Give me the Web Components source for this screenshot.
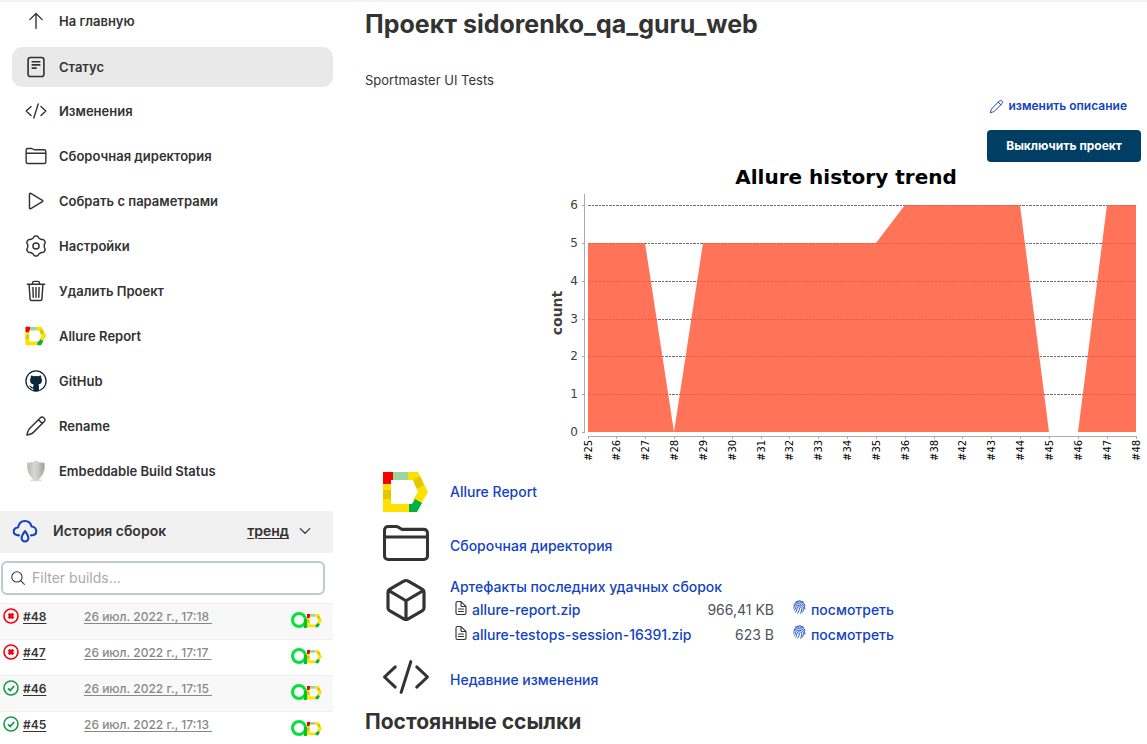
<!DOCTYPE html>
<html lang="ru">
<head>
<meta charset="utf-8">
<title>sidorenko_qa_guru_web</title>
<style>
html { scrollbar-width: none; }
body { margin: 0; font: 14px/20px Inter, "Noto Sans", sans-serif; color: #333; background: #fff; --link: #1343c0; }
</style>
</head>
<body>
<project-page></project-page>
<script>
const stroke = (body, w = 32, box = '0 0 512 512') => `<svg viewBox="${box}" fill="none" stroke="currentColor" stroke-width="${w}" stroke-linecap="round" stroke-linejoin="round">${body}</svg>`;
const WIDE = '-12 -12 536 536';
const gearPath = () => {
  const pts = [];
  for (let i = 0; i < 90; i++) {
    const t = i * Math.PI / 45, r = 212 + 22 * Math.tanh(1.6 * Math.cos(6 * t));
    pts.push(`${Math.round(256 + r * Math.sin(t))} ${Math.round(256 - r * Math.cos(t))}`);
  }
  return `M${pts.join('L')}Z`;
};
const DOC = '<path d="M416 221V416a48 48 0 0 1-48 48H144a48 48 0 0 1-48-48V96a48 48 0 0 1 48-48h99a32 32 0 0 1 22 9L407 199a32 32 0 0 1 9 22ZM256 56V176a32 32 0 0 0 32 32H408M176 288H336M176 368H336"/>';
const PEN = '<path d="M358 62a52 52 0 0 1 76 0l14 14a52 52 0 0 1 0 76L196 404Q166 434 116 448L44 468 64 396Q78 346 108 316ZM312 108L404 200"/>';
const ALLURE = '<path fill="#ffe000" d="M0 12H8V32H26V40H0ZM25 0H35L45 20 38 32 30 28 35 20 30 8H25Z"/><path fill="#f60000" d="M0 0H10V8H8V12H0Z"/><path fill="#9ad4a0" d="M10 0H25V8H10Z"/><path fill="#e2c800" d="M0 18H8V27H0ZM30 8L37 4 41 13 34 17Z"/><path fill="#00b140" d="M26 32H29L32 27 39 31 34 40H26Z"/>';
const ICONS = {
  up: stroke('<path d="M112 224L256 80 400 224M256 90V428"/>'),
  status: stroke('<rect x="72" y="36" width="368" height="440" rx="54"/><path d="M168 134H344M168 208H344M168 282H260"/>', 38),
  code: stroke('<path d="M136 368L16 256 136 144M376 368L496 256 376 144M310 84L202 428"/>', 34, WIDE),
  folder: stroke('<path d="M456 440H56a40 40 0 0 1-40-40V112A40 40 0 0 1 56 72h92a40 40 0 0 1 22 7l28 18A40 40 0 0 0 220 104H456a40 40 0 0 1 40 40V400A40 40 0 0 1 456 440ZM16 188H496"/>', 34, WIDE),
  play: stroke('<path d="M104 96V416c0 17 17 28 31 20l270-163c12-7 12-27 0-34L135 76C121 68 104 79 104 96Z"/>', 34),
  gear: stroke(`<circle cx="256" cy="256" r="72"/><path d="${gearPath()}"/>`, 34),
  trash: stroke('<path d="M96 112L118 440c1 18 14 36 34 36H360c20 0 33-18 34-36L416 112M56 100H456M176 100V68a36 36 0 0 1 36-36h88a36 36 0 0 1 36 36v32M256 176V400M184 176L192 400M328 176L320 400"/>', 34),
  pen: stroke(PEN, 34),
  allure: `<svg viewBox="-1 -4 48 48">${ALLURE}</svg>`,
  github: '<svg viewBox="0 0 24 24" fill="#0b2539"><circle cx="12" cy="12" r="11" fill="#fff" stroke="#0b2539" stroke-width="1.4"/><path d="M6.6 5.900Q8 6 9.600 6.900Q12 6.400 14.400 6.900Q16 6 17.400 5.900Q17.900 7 17.600 8.400Q18.600 9.600 18.500 11.200Q18.400 15.200 14.600 15.800Q15.200 16.600 15.200 17.800V22.600Q12 23.600 9 22.600V20.200Q6.600 20.500 5.800 18.800Q5.300 17.600 4.500 17.200Q5.600 16.600 6.600 17.800Q7.600 19.200 9 18.600Q8.900 16.400 9.500 15.800Q5.600 15.200 5.500 11.200Q5.400 9.600 6.400 8.400Q6.100 7 6.600 5.900Z"/></svg>',
  shield: '<svg viewBox="0 0 24 24"><defs><linearGradient id="s"><stop offset="0" stop-color="#b5b7b1"/><stop offset=".45" stop-color="#dcddd9"/><stop offset="1" stop-color="#9a9d96"/></linearGradient></defs><ellipse cx="12" cy="22" rx="7" ry="1.2" fill="#ddd"/><path fill="url(#s)" stroke="#c9cac6" stroke-width=".8" d="M12 1Q16 3.600 21.500 3.200Q22 10 19.500 15Q17 20 12 22.500Q7 20 4.500 15Q2 10 2.500 3.200Q8 3.600 12 1Z"/><path d="M12 4V19" stroke="#aeb0aa" stroke-width=".8" stroke-dasharray="1 1"/></svg>',
  cloud: stroke('<path d="M138 342C80 340 34 310 34 266C34 220 74 192 118 188C134 112 186 58 252 58C318 58 370 104 386 168C440 172 478 212 478 260C478 308 440 342 374 342M256 256C232 294 188 348 188 396A68 66 0 0 0 324 396C324 348 280 294 256 256Z"/>', 40),
  chevron: stroke('<path d="M84 170L256 342 428 170"/>', 48),
  search: stroke('<circle cx="221" cy="221" r="165"/><path d="M342 342L460 460"/>', 34),
  failed: '<svg viewBox="0 0 16 16" fill="none" stroke="#f0000f"><circle cx="8" cy="8" r="7" stroke-width="1.600"/><path d="M5.700 5.700L10.300 10.300M10.300 5.700L5.700 10.300" stroke-width="2.800"/></svg>',
  passed: '<svg viewBox="0 0 16 16" fill="none" stroke="#169c46"><circle cx="8" cy="8" r="7" stroke-width="1.600"/><path d="M5 8.300L7.200 10.400 11.200 6" stroke-width="1.800"/></svg>',
  cube: stroke('<path d="M448 341V171A32 32 0 0 0 432 143L280 55a48 48 0 0 0-48 0L80 143A32 32 0 0 0 64 171V341A32 32 0 0 0 80 369l152 88a48 48 0 0 0 48 0l152-88A32 32 0 0 0 448 341ZM69 154L256 264 443 154M256 464V264"/>', 34),
  doc: stroke(DOC, 36, '32 24 448 464'),
  print: stroke('<path d="M120 84Q256 -10 392 84M72 200Q92 84 256 84Q420 84 440 200M60 300Q60 140 256 140Q452 140 440 330M90 370Q120 330 116 280Q120 196 256 196Q400 196 390 310Q388 380 360 430M130 430Q176 360 172 290Q176 248 256 248Q340 248 334 310Q330 400 296 470M196 464Q256 370 256 300"/>', 30)
};
class BaseElement extends HTMLElement {
  render(css, html) {
    this.attachShadow({ mode: 'open' }).innerHTML = `<style>*{box-sizing:border-box}${css}</style>${html}`;
  }
}
customElements.define('app-icon', class extends BaseElement {
  connectedCallback() {
    this.render(':host{display:block;flex:none;width:24px;height:24px}svg{display:block;width:100%;height:100%;overflow:visible}', ICONS[this.getAttribute('name')]);
  }
});
customElements.define('nav-item', class extends BaseElement {
  connectedCallback() {
    this.render(`:host{display:block}
      a{display:flex;align-items:center;gap:12px;height:40px;padding:0 13px 2px;border-radius:10px;color:inherit;text-decoration:none;font-size:13px;font-weight:600}
      :host([active]) a{padding-bottom:0;background:#e9e9e9}
      app-icon{width:22px;height:22px}`,
      `<a href="#"><app-icon name="${this.getAttribute('icon')}"></app-icon><span><slot></slot></span></a>`);
  }
});
customElements.define('build-row', class extends BaseElement {
  connectedCallback() {
    this.render(`:host{display:flex;align-items:flex-start;height:36px;padding:4px 11px 0 3px;border-top:1px solid #efefef;font-size:12px;line-height:18px}
      :host(:nth-child(odd)){background:#f8f8f8}
      app-icon{width:16px;height:16px}
      a{color:inherit;text-underline-offset:2px}
      .n{width:61px;margin-left:4px;font-weight:600}
      .d{color:#888;white-space:pre;flex:1;font-weight:500}
      .b{display:flex;margin-top:3px}
      .b svg{display:block;width:32px;height:18px}`,
      `<app-icon name="${this.getAttribute('state')}"></app-icon>
       <a class="n" href="#"><slot></slot></a>
       <span class="d"><a href="#">${this.getAttribute('date')}&nbsp;</a></span>
       <a class="b" href="#" aria-label="Allure"><svg viewBox="0 0 32 18"><circle cx="9" cy="9" r="6.500" fill="none" stroke="#05e03c" stroke-width="3"/><path d="M15.500 8V17" stroke="#00c234" stroke-width="3"/><g transform="translate(17 3) scale(.33)">${ALLURE}</g></svg></a>`);
  }
});
customElements.define('build-history', class extends BaseElement {
  connectedCallback() {
    this.render(`:host{display:block}
      header{display:flex;align-items:center;height:42px;padding:0 21px 2px 12px;background:#f1f1f1;font-weight:600}
      header app-icon{width:26px;height:26px;color:#1343c0}
      h2{flex:1;margin:0 0 0 15px;font-size:14px;font-weight:600}
      a{color:inherit;text-underline-offset:2px}
      header .c{width:14px;height:14px;margin-left:9px;color:#333}
      label{display:flex;align-items:center;gap:6px;height:34px;margin:8px 8px 8px 1px;padding:0 7px;border:2px solid #bdcad2;border-radius:6px}
      label app-icon{width:16px;height:16px}
      input{flex:1;min-width:0;border:0;padding:0;outline:0;background:none;font:inherit;color:inherit}
      input::placeholder{color:#aaa;opacity:1}`,
      `<header><app-icon name="cloud"></app-icon><h2>История сборок</h2><a href="#">тренд</a><app-icon class="c" name="chevron"></app-icon></header>
       <label><app-icon name="search"></app-icon><input type="text" placeholder="Filter builds..." aria-label="Filter builds"></label>
       <div>
       <build-row state="failed" date="26 июл. 2022 г., 17:18">#48</build-row>
       <build-row state="failed" date="26 июл. 2022 г., 17:17">#47</build-row>
       <build-row state="passed" date="26 июл. 2022 г., 17:15">#46</build-row>
       <build-row state="passed" date="26 июл. 2022 г., 17:13">#45</build-row>
       </div>`);
  }
});
customElements.define('side-panel', class extends BaseElement {
  connectedCallback() {
    this.render(':host{display:block}nav{display:grid;gap:5px;padding-left:12px;margin-bottom:19px}',
      `<nav>
        <nav-item icon="up">На главную</nav-item>
        <nav-item icon="status" active>Статус</nav-item>
        <nav-item icon="code">Изменения</nav-item>
        <nav-item icon="folder">Сборочная директория</nav-item>
        <nav-item icon="play">Собрать с параметрами</nav-item>
        <nav-item icon="gear">Настройки</nav-item>
        <nav-item icon="trash">Удалить Проект</nav-item>
        <nav-item icon="allure">Allure Report</nav-item>
        <nav-item icon="github">GitHub</nav-item>
        <nav-item icon="pen">Rename</nav-item>
        <nav-item icon="shield">Embeddable Build Status</nav-item>
      </nav><build-history></build-history>`);
  }
});
customElements.define('trend-chart', class extends BaseElement {
  connectedCallback() {
    const builds = [25,26,27,28,29,30,31,32,33,34,35,36,38,42,43,44,45,46,47,48];
    const counts = [5,5,5,0,5,5,5,5,5,5,5,6,6,6,6,6,0,0,6,6];
    const x = i => Math.floor(47 + i * 548 / 19), y = v => Math.round(269 - v * 227 / 6);
    let grid = '', ticks = '', labels = '';
    for (let v = 0; v <= 6; v++) {
      if (v) grid += `<path d="M47 ${y(v)}.500H595" stroke="#707070" stroke-dasharray="3 1 2 1"/>`;
      ticks += `<path d="M41 ${y(v)}.500h3" stroke="#aaa"/>`;
      labels += `<text x="37" y="${y(v) + 4}" text-anchor="end" font-size="12" fill="#404040">${v}</text>`;
    }
    builds.forEach((b, i) => {
      ticks += `<path d="M${x(i)}.500 273v3" stroke="#aaa"/>`;
      labels += `<text transform="translate(${x(i) + 4} 298) rotate(-90)" font-size="10" fill="#000">#${b}</text>`;
    });
    this.render(':host{display:block;width:600px;max-width:100%}svg{display:block;width:100%;font-family:"DejaVu Sans",sans-serif}',
      `<svg viewBox="0 0 600 300" role="img" aria-label="Allure history trend">
        ${grid}
        <path fill="#ff5a3c" fill-opacity=".85" d="M47 269${counts.map((c, i) => `L${x(i)} ${y(c)}`).join('')}V269Z"/>
        <path d="M43.500 31V269M47 273.500H595" stroke="#aaa"/>${ticks}${labels}
        <text x="305" y="21" text-anchor="middle" font-size="20" font-weight="700" fill="#000">Allure history trend</text>
        <text transform="translate(21 150) rotate(-90)" text-anchor="middle" font-size="14" font-weight="700" fill="#404040">count</text>
      </svg>`);
  }
});
customElements.define('summary-row', class extends BaseElement {
  connectedCallback() {
    this.render(`:host{display:grid;grid-template-columns:48px 1fr;column-gap:20px;min-height:54px}
      app-icon{width:48px;height:48px}
      app-icon[name=allure]{align-self:center}
      .c{align-self:center}
      :host([top]){padding:3px 0 5px}
      :host([top]) .c{align-self:start}
      ::slotted(a){color:var(--link);text-decoration:none;font-weight:500}`,
      `<app-icon name="${this.getAttribute('icon')}"></app-icon><div class="c"><slot></slot></div>`);
  }
});
customElements.define('artifact-list', class extends BaseElement {
  connectedCallback() {
    const files = [['allure-report.zip', '966,41 KB'], ['allure-testops-session-16391.zip', '623 B']];
    this.render(`:host{display:block}
      .t{display:block;line-height:22px}
      a{color:var(--link);text-decoration:none;font-weight:500}
      table{border-collapse:collapse}
      td{height:25px;padding:0 0 2px;white-space:nowrap}
      .f{display:flex;gap:4px;padding-left:4px;align-items:center}
      .f app-icon{width:14px;height:16px;margin-bottom:3px}
      .s{padding-left:16px;text-align:right;color:#4d545d}
      .p{padding-left:18px}
      .p a{display:flex;align-items:center;gap:4px}
      .p app-icon{width:15px;height:16px;margin-bottom:5px}`,
      `<a class="t" href="#">Артефакты последних удачных сборок</a>
       <table>${files.map(f => `<tr><td><div class="f"><app-icon name="doc"></app-icon><a href="#">${f[0]}</a></div></td><td class="s">${f[1]}</td><td class="p"><a href="#"><app-icon name="print"></app-icon>посмотреть</a></td></tr>`).join('')}</table>`);
  }
});
customElements.define('project-main', class extends BaseElement {
  connectedCallback() {
    this.render(`:host{display:block;min-width:0;padding:6px 6px 0 32px}
      h1{margin:0;font-size:25px;line-height:32px;font-weight:700}
      h2{margin:0;font-size:21px;line-height:30px;font-weight:700}
      p{margin:30px 0 0;font-size:13px;line-height:20px}
      .a{display:flex;flex-direction:column;align-items:flex-end}
      .e{display:flex;align-items:center;gap:4px;margin:6px 14px 14px 0;color:var(--link);font-size:12px;font-weight:600;text-decoration:none}
      .e app-icon{width:15px;height:15px}
      button{height:32px;padding:0 19px;border:0;border-radius:4px;background:#003e64;color:#fff;font:700 12px/20px Inter,"Noto Sans",sans-serif}
      trend-chart{margin:1px 0 2px}
      .l{padding-left:17px}`,
      `<h1>Проект sidorenko_qa_guru_web</h1><p>Sportmaster UI Tests</p>
       <div class="a"><a class="e" href="#"><app-icon name="pen"></app-icon>изменить описание</a>
       <button type="button">Выключить проект</button><trend-chart></trend-chart></div>
       <div class="l">
       <summary-row icon="allure"><a href="#">Allure Report</a></summary-row>
       <summary-row icon="folder"><a href="#">Сборочная директория</a></summary-row>
       <summary-row icon="cube" top><artifact-list></artifact-list></summary-row>
       <summary-row icon="code"><a href="#">Недавние изменения</a></summary-row>
       </div><h2>Постоянные ссылки</h2>`);
  }
});
customElements.define('project-page', class extends BaseElement {
  connectedCallback() {
    this.render(':host{display:grid;grid-template-columns:333px minmax(0,1fr);border-top:2px solid #f3f3f3}',
      '<side-panel></side-panel><project-main></project-main>');
  }
});
</script>
</body>
</html>
